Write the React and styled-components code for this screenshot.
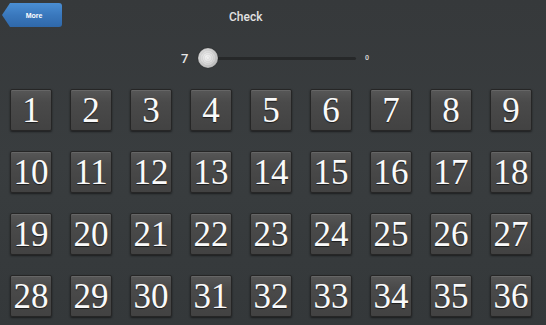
import React from 'react';
import styled, { createGlobalStyle } from 'styled-components';

const GlobalStyle = createGlobalStyle`
  html, body {
    margin: 0;
    padding: 0;
    background: #35393b;
  }
  * { box-sizing: border-box; }
`;

const Screen = styled.div`
  width: 546px;
  height: 325px;
  overflow: hidden;
  background: linear-gradient(180deg, #36393b 0%, #393d3f 50%, #34383a 100%);
  font-family: Roboto, "Liberation Sans", sans-serif;
`;

const TopBar = styled.div`
  height: 30px;
  display: flex;
  align-items: flex-start;
  padding: 3px 0 0 2px;
`;

const MoreButton = styled.button`
  width: 60px;
  height: 24px;
  border: none;
  padding: 0 0 0 4px;
  color: #fff;
  font-family: "Liberation Sans", sans-serif;
  font-size: 7px;
  font-weight: bold;
  background: linear-gradient(180deg, #4a8ed3 0%, #3a78bd 50%, #2f68aa 100%);
  clip-path: polygon(8px 0, 100% 0, 100% 100%, 8px 100%, 0 50%);
  border-radius: 0 3px 3px 0;
`;

const Title = styled.div`
  margin: 7px 0 0 167px;
  color: #e2e2e2;
  font-size: 12px;
  font-weight: 500;
`;

const SliderRow = styled.div`
  height: 56px;
  display: flex;
  align-items: center;
  padding: 0 0 0 181px;
`;

const Value = styled.span`
  color: #e6e6e6;
  font-size: 13px;
  font-weight: 500;
  width: 17px;
`;

const Track = styled.div`
  position: relative;
  width: 156px;
  height: 3px;
  margin-left: 2px;
  background: #262829;
  border-radius: 2px;
`;

const Thumb = styled.div`
  position: absolute;
  left: -2px;
  top: -9px;
  width: 20px;
  height: 20px;
  border-radius: 50%;
  background:
    repeating-radial-gradient(circle at 50% 50%, rgba(255, 255, 255, 0) 0 1px, rgba(0, 0, 0, 0.04) 1px 2px),
    radial-gradient(circle at 45% 45%, #f4f4f4 0%, #d6d6d6 45%, #a8a8a8 85%, #8a8a8a 100%);
  box-shadow: 0 0 1px #111;
`;

const MaxLabel = styled.span`
  color: #cfcfcf;
  font-size: 7px;
  font-weight: bold;
  margin-left: 9px;
`;

const Grid = styled.div`
  display: grid;
  grid-template-columns: repeat(9, 42px);
  grid-auto-rows: 42px;
  column-gap: 18px;
  row-gap: 20px;
  padding: 3px 0 0 10px;
`;

const Tile = styled.div`
  display: flex;
  align-items: center;
  justify-content: center;
  border: 1px solid #262626;
  border-radius: 2px;
  background: linear-gradient(180deg, #575757 0%, #4a4a4a 30%, #424242 100%);
  box-shadow: inset 0 1px 0 #666, 0 1px 2px rgba(0, 0, 0, 0.5);
  color: #fafafa;
  font-family: "Liberation Serif", "DejaVu Serif", serif;
  font-size: 35px;
  line-height: 1;
  padding-top: 1px;
  text-shadow: 0 1px 1px rgba(0, 0, 0, 0.6);
`;

const numbers = Array.from({ length: 36 }, (_, i) => i + 1);

export default function App() {
  return (
    <>
      <GlobalStyle />
      <Screen>
        <TopBar>
          <MoreButton>More</MoreButton>
          <Title>Check</Title>
        </TopBar>
        <SliderRow>
          <Value>7</Value>
          <Track>
            <Thumb />
          </Track>
          <MaxLabel>0</MaxLabel>
        </SliderRow>
        <Grid>
          {numbers.map((n) => (
            <Tile key={n}>{n}</Tile>
          ))}
        </Grid>
      </Screen>
    </>
  );
}
